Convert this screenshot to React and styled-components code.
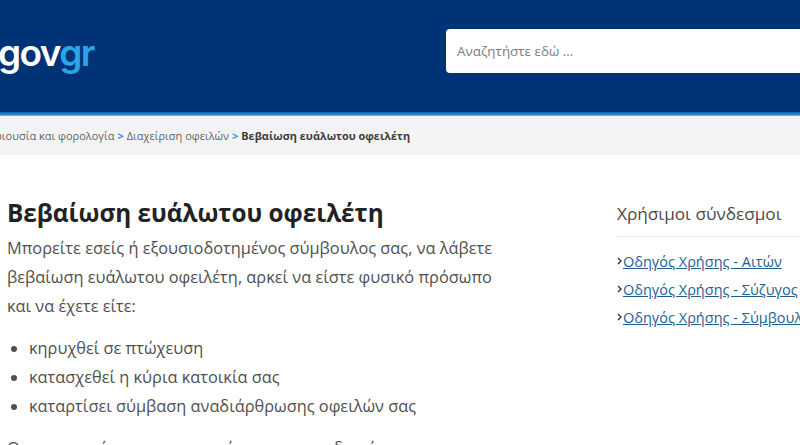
import React from "react";
import styled, { createGlobalStyle } from "styled-components";

const Global = createGlobalStyle`
  html, body {
    margin: 0;
    padding: 0;
    background: #fff;
    overflow: hidden;
  }
  body {
    font-family: "Open Sans", "Noto Sans", sans-serif;
    color: #40403f;
  }
`;

const Page = styled.div`
  width: 800px;
  height: 445px;
  overflow: hidden;
`;

const Header = styled.header`
  height: 112px;
  background: #003375;
  display: flex;
  align-items: center;
  justify-content: space-between;
`;

const Stripe = styled.div`
  height: 4px;
  background: linear-gradient(#15609f, #2a94d6 75%, #8fd0ee);
`;

const Logo = styled.div`
  margin-left: -2px;
  margin-top: -7px;
  font-family: "Inter", sans-serif;
  font-weight: 600;
  font-size: 37px;
  line-height: 44px;
  letter-spacing: -1.6px;
  color: #fff;
`;

const LogoAccent = styled.span`
  color: #2aa5e6;
`;

const Search = styled.div`
  box-sizing: border-box;
  width: 369px;
  margin-top: -10px;
  margin-right: -15px;
  height: 44px;
  background: #fff;
  border-radius: 4px 0 0 4px;
  display: flex;
  align-items: center;
  padding-left: 11px;
  font-size: 13.4px;
  color: #7d7d80;
`;

const Crumbs = styled.nav`
  height: 39px;
  background: #f3f3f5;
  display: flex;
  align-items: center;
  font-size: 11px;
  color: #636365;
  white-space: nowrap;
`;

const CrumbTrack = styled.div`
  margin-left: -18px;
  display: flex;
  align-items: center;
  gap: 3px;
`;

const CrumbSep = styled.span`
  color: #2b8fd1;
  font-weight: 700;
`;

const CrumbCurrent = styled.strong`
  color: #3c3c3b;
  font-weight: 700;
  font-size: 10.9px;
`;

const Content = styled.main`
  display: flex;
  padding-left: 7px;
  padding-top: 42px;
`;

const Article = styled.article`
  width: 610px;
  flex: none;
`;

const Title = styled.h1`
  margin: 0 0 5px;
  font-size: 24.3px;
  line-height: 32px;
  font-weight: 700;
  color: #222;
`;

const Para = styled.p`
  margin: 0 0 14px;
  width: 500px;
  font-size: 16.35px;
  line-height: 28.8px;
  color: #4f4f4f;
`;

const List = styled.ul`
  margin: 0 0 14px;
  padding-left: 22px;
  font-size: 16.35px;
  line-height: 28.6px;
  color: #4f4f4f;
`;

const Sidebar = styled.aside`
  width: 260px;
  flex: none;
  padding-top: 5px;
`;

const SideTitle = styled.h2`
  margin: 0;
  padding-bottom: 11px;
  font-size: 17.2px;
  line-height: 23px;
  font-weight: 400;
  color: #4a4a4a;
  border-bottom: 1px solid #ebebeb;
`;

const SideLinks = styled.ul`
  list-style: none;
  margin: 10px 0 0;
  padding: 0;
`;

const SideItem = styled.li`
  display: flex;
  align-items: center;
  gap: 1px;
  height: 28px;
  font-size: 14.5px;
  white-space: nowrap;
`;

const Chevron = styled.svg`
  width: 5px;
  height: 8px;
  flex: none;
`;

const SideLink = styled.a`
  color: #1f5f96;
  text-decoration: underline;
`;

const sideLinks = [
  "Οδηγός Χρήσης - Αιτών",
  "Οδηγός Χρήσης - Σύζυγος",
  "Οδηγός Χρήσης - Σύμβουλος",
];

const bullets = [
  "κηρυχθεί σε πτώχευση",
  "κατασχεθεί η κύρια κατοικία σας",
  "καταρτίσει σύμβαση αναδιάρθρωσης οφειλών σας",
];

export default function App() {
  return (
    <Page>
      <Global />
      <Header>
        <Logo>
          gov<LogoAccent>gr</LogoAccent>
        </Logo>
        <Search>Αναζητήστε εδώ ...</Search>
      </Header>
      <Stripe />
      <Crumbs>
        <CrumbTrack>
          <span>Περιουσία και φορολογία</span>
          <CrumbSep>&gt;</CrumbSep>
          <span>Διαχείριση οφειλών</span>
          <CrumbSep>&gt;</CrumbSep>
          <CrumbCurrent>Βεβαίωση ευάλωτου οφειλέτη</CrumbCurrent>
        </CrumbTrack>
      </Crumbs>
      <Content>
        <Article>
          <Title>Βεβαίωση ευάλωτου οφειλέτη</Title>
          <Para>
            Μπορείτε εσείς ή εξουσιοδοτημένος σύμβουλος σας, να λάβετε βεβαίωση
            ευάλωτου οφειλέτη, αρκεί να είστε φυσικό πρόσωπο και να έχετε είτε:
          </Para>
          <List>
            {bullets.map(item => (
              <li key={item}>{item}</li>
            ))}
          </List>
          <Para>Θα χρειαστεί να χρησιμοποιήσετε τους κωδικούς σας</Para>
        </Article>
        <Sidebar>
          <SideTitle>Χρήσιμοι σύνδεσμοι</SideTitle>
          <SideLinks>
            {sideLinks.map(link => (
              <SideItem key={link}>
                <Chevron viewBox="0 0 5 8">
                  <path d="M1 1l3 3-3 3" fill="none" stroke="#1d3f66" strokeWidth="1.4" />
                </Chevron>
                <SideLink href="#">{link}</SideLink>
              </SideItem>
            ))}
          </SideLinks>
        </Sidebar>
      </Content>
    </Page>
  );
}
